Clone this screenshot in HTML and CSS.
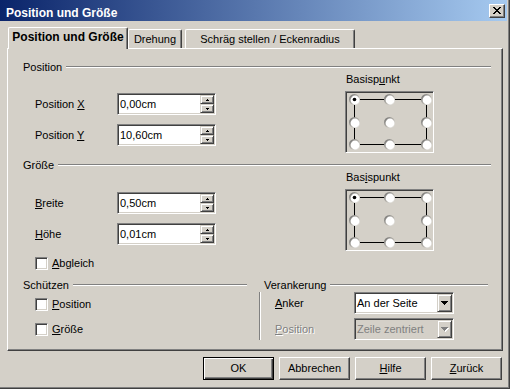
FILE: index.html
```html
<!DOCTYPE html>
<html lang="de">
<head>
<meta charset="utf-8">
<title>Position und Größe</title>
<link rel="stylesheet" href="styles.css">
</head>
<body>
<div class="window">
  <div class="titlebar">
    <span class="title">Position und Größe</span>
    <span class="close" aria-label="Schließen">
      <svg width="8" height="7" viewBox="0 0 8 7" shape-rendering="crispEdges"><path d="M0 0h2v1H0zM6 0h2v1H6zM1 1h2v1H1zM5 1h2v1H5zM2 2h4v1H2zM3 3h2v1H3zM2 4h4v1H2zM1 5h2v1H1zM5 5h2v1H5zM0 6h2v1H0zM6 6h2v1H6z"/></svg>
    </span>
  </div>

  <div class="tabs">
    <div class="tab tab-active">Position und Größe</div>
    <div class="tab tab-rot">Drehung</div>
    <div class="tab tab-slant">Schräg stellen / Eckenradius</div>
  </div>

  <div class="panel">
    <section class="group group-pos">
      <div class="group-head"><span>Position</span><i class="rule"></i></div>
      <div class="group-body">
        <div class="fields">
          <div class="field">
            <span class="field-label">Position <u>X</u></span>
            <div class="spin">
              <span class="spin-val">0,00cm</span>
              <span class="spin-btns">
                <span class="spin-btn"><svg width="3" height="2" viewBox="0 0 3 2" shape-rendering="crispEdges"><path d="M1 0h1v1H1zM0 1h3v1H0z"/></svg></span>
                <span class="spin-btn"><svg width="3" height="2" viewBox="0 0 3 2" shape-rendering="crispEdges"><path d="M0 0h3v1H0zM1 1h1v1H1z"/></svg></span>
              </span>
            </div>
          </div>
          <div class="field">
            <span class="field-label">Position <u>Y</u></span>
            <div class="spin">
              <span class="spin-val">10,60cm</span>
              <span class="spin-btns">
                <span class="spin-btn"><svg width="3" height="2" viewBox="0 0 3 2" shape-rendering="crispEdges"><path d="M1 0h1v1H1zM0 1h3v1H0z"/></svg></span>
                <span class="spin-btn"><svg width="3" height="2" viewBox="0 0 3 2" shape-rendering="crispEdges"><path d="M0 0h3v1H0zM1 1h1v1H1z"/></svg></span>
              </span>
            </div>
          </div>
        </div>
        <div class="refpoint">
          <div class="rp-label">Basisp<u>u</u>nkt</div>
          <div class="rp-box">
            <svg width="85" height="58" viewBox="0 0 85 58">
              <defs>
                <linearGradient id="ring1" x1="0" y1="0" x2="1" y2="1">
                  <stop offset="0" stop-color="#6a6a6a"/>
                  <stop offset="0.55" stop-color="#b8b5ae"/>
                  <stop offset="1" stop-color="#ffffff"/>
                </linearGradient>
              </defs>
              <rect x="7.5" y="6.5" width="72" height="45" fill="none" stroke="#000" stroke-width="1"/>
              <g fill="url(#ring1)">
                <circle cx="7.5" cy="6.5" r="5.5"/><circle cx="42.5" cy="6.5" r="5.5"/><circle cx="79.5" cy="6.5" r="5.5"/>
                <circle cx="7.5" cy="29.5" r="5.5"/><circle cx="42.5" cy="29.5" r="5.5"/><circle cx="79.5" cy="29.5" r="5.5"/>
                <circle cx="7.5" cy="51.5" r="5.5"/><circle cx="42.5" cy="51.5" r="5.5"/><circle cx="79.5" cy="51.5" r="5.5"/>
              </g>
              <g fill="#fff">
                <circle cx="8" cy="7" r="4.4"/><circle cx="43" cy="7" r="4.4"/><circle cx="80" cy="7" r="4.4"/>
                <circle cx="8" cy="30" r="4.4"/><circle cx="43" cy="30" r="4.4"/><circle cx="80" cy="30" r="4.4"/>
                <circle cx="8" cy="52" r="4.4"/><circle cx="43" cy="52" r="4.4"/><circle cx="80" cy="52" r="4.4"/>
              </g>
              <circle cx="7.5" cy="6.5" r="1.8" fill="#000"/>
            </svg>
          </div>
        </div>
      </div>
    </section>

    <section class="group group-size">
      <div class="group-head"><span>Größe</span><i class="rule"></i></div>
      <div class="group-body">
        <div class="fields fields-size">
          <div class="field">
            <span class="field-label"><u>B</u>reite</span>
            <div class="spin">
              <span class="spin-val">0,50cm</span>
              <span class="spin-btns">
                <span class="spin-btn"><svg width="3" height="2" viewBox="0 0 3 2" shape-rendering="crispEdges"><path d="M1 0h1v1H1zM0 1h3v1H0z"/></svg></span>
                <span class="spin-btn"><svg width="3" height="2" viewBox="0 0 3 2" shape-rendering="crispEdges"><path d="M0 0h3v1H0zM1 1h1v1H1z"/></svg></span>
              </span>
            </div>
          </div>
          <div class="field">
            <span class="field-label"><u>H</u>öhe</span>
            <div class="spin">
              <span class="spin-val">0,01cm</span>
              <span class="spin-btns">
                <span class="spin-btn"><svg width="3" height="2" viewBox="0 0 3 2" shape-rendering="crispEdges"><path d="M1 0h1v1H1zM0 1h3v1H0z"/></svg></span>
                <span class="spin-btn"><svg width="3" height="2" viewBox="0 0 3 2" shape-rendering="crispEdges"><path d="M0 0h3v1H0zM1 1h1v1H1z"/></svg></span>
              </span>
            </div>
          </div>
          <div class="check-row check-keep">
            <span class="check"></span><span><u>A</u>bgleich</span>
          </div>
        </div>
        <div class="refpoint">
          <div class="rp-label">Bas<u>i</u>spunkt</div>
          <div class="rp-box">
            <svg width="85" height="58" viewBox="0 0 85 58">
              <defs>
                <linearGradient id="ring2" x1="0" y1="0" x2="1" y2="1">
                  <stop offset="0" stop-color="#6a6a6a"/>
                  <stop offset="0.55" stop-color="#b8b5ae"/>
                  <stop offset="1" stop-color="#ffffff"/>
                </linearGradient>
              </defs>
              <rect x="7.5" y="6.5" width="72" height="45" fill="none" stroke="#000" stroke-width="1"/>
              <g fill="url(#ring2)">
                <circle cx="7.5" cy="6.5" r="5.5"/><circle cx="42.5" cy="6.5" r="5.5"/><circle cx="79.5" cy="6.5" r="5.5"/>
                <circle cx="7.5" cy="29.5" r="5.5"/><circle cx="42.5" cy="29.5" r="5.5"/><circle cx="79.5" cy="29.5" r="5.5"/>
                <circle cx="7.5" cy="51.5" r="5.5"/><circle cx="42.5" cy="51.5" r="5.5"/><circle cx="79.5" cy="51.5" r="5.5"/>
              </g>
              <g fill="#fff">
                <circle cx="8" cy="7" r="4.4"/><circle cx="43" cy="7" r="4.4"/><circle cx="80" cy="7" r="4.4"/>
                <circle cx="8" cy="30" r="4.4"/><circle cx="43" cy="30" r="4.4"/><circle cx="80" cy="30" r="4.4"/>
                <circle cx="8" cy="52" r="4.4"/><circle cx="43" cy="52" r="4.4"/><circle cx="80" cy="52" r="4.4"/>
              </g>
              <circle cx="7.5" cy="6.5" r="1.8" fill="#000"/>
            </svg>
          </div>
        </div>
      </div>
    </section>

    <div class="bottom">
      <section class="group-prot">
        <div class="group-head"><span>Schützen</span><i class="rule"></i></div>
        <div class="prot-body">
          <div class="check-row"><span class="check"></span><span><u>P</u>osition</span></div>
          <div class="check-row"><span class="check"></span><span><u>G</u>röße</span></div>
        </div>
      </section>
      <section class="group-anchor">
        <div class="group-head anchor-head"><span>Verankerung</span><i class="rule"></i></div>
        <div class="anchor-body">
          <div class="field">
            <span class="anchor-label"><u>A</u>nker</span>
            <div class="combo">
              <span class="combo-val">An der Seite</span>
              <span class="combo-btn"><svg width="7" height="4" viewBox="0 0 7 4" shape-rendering="crispEdges"><path d="M0 0h7v1H0zM1 1h5v1H1zM2 2h3v1H2zM3 3h1v1H3z"/></svg></span>
            </div>
          </div>
          <div class="field">
            <span class="anchor-label disabled"><u>P</u>osition</span>
            <div class="combo combo-disabled">
              <span class="combo-val">Zeile zentriert</span>
              <span class="combo-btn"><svg width="8" height="5" viewBox="0 0 8 5" shape-rendering="crispEdges"><path fill="#fff" d="M1 1h7v1H1zM2 2h5v1H2zM3 3h3v1H3zM4 4h1v1H4z"/><path fill="#808080" d="M0 0h7v1H0zM1 1h5v1H1zM2 2h3v1H2zM3 3h1v1H3z"/></svg></span>
            </div>
          </div>
        </div>
      </section>
    </div>
  </div>

  <div class="buttons">
    <button class="btn btn-default">OK</button>
    <button class="btn">Abbrechen</button>
    <button class="btn"><u>H</u>ilfe</button>
    <button class="btn"><u>Z</u>urück</button>
  </div>
</div>
</body>
</html>
```

FILE: styles.css
```css
* { box-sizing: border-box; }

html, body {
  margin: 0;
  padding: 0;
}

body {
  width: 510px;
  height: 389px;
  overflow: hidden;
  background: #d4d0c8;
  color: #000;
  font: 11px/13px "Liberation Sans", Arial, sans-serif;
}

u { text-decoration: underline; text-underline-offset: 1px; }

.window {
  width: 510px;
  height: 389px;
  border-right: 1px solid #404040;
  border-bottom: 1px solid #404040;
  box-shadow: inset -1px -1px 0 #808080;
  display: flex;
  flex-direction: column;
}

/* title bar */
.titlebar {
  flex: none;
  width: 507px;
  height: 21px;
  background: linear-gradient(to right, #0a246a, #a6caf0);
  display: flex;
  align-items: center;
  justify-content: space-between;
  padding: 0 2px 0 6px;
}

.title {
  color: #fff;
  font-weight: bold;
  font-size: 12px;
  line-height: 14px;
  padding-top: 4px;
}

.close {
  width: 16px;
  height: 14px;
  background: #d4d0c8;
  border: 1px solid;
  border-color: #fff #404040 #404040 #fff;
  box-shadow: inset -1px -1px 0 #808080;
  display: flex;
  align-items: center;
  justify-content: center;
  padding-right: 1px;
}

.close svg { display: block; }

/* tabs */
.tabs {
  flex: none;
  display: flex;
  align-items: flex-end;
  height: 21px;
  margin-top: 6px;
  padding-left: 8px;
}

.tab {
  height: 19px;
  border-top: 1px solid #fff;
  border-left: 1px solid #fff;
  border-right: 1px solid #404040;
  box-shadow: inset -1px 0 0 #808080;
  border-radius: 2px 2px 0 0;
  display: flex;
  align-items: center;
  justify-content: center;
  padding-top: 1px;
}

.tab-active {
  position: relative;
  z-index: 1;
  width: 120px;
  height: 22px;
  margin-bottom: -1px;
  background: #d4d0c8;
  font-weight: bold;
  font-size: 12px;
  padding-top: 0;
  padding-bottom: 2px;
}

.tab-rot { width: 54px; }

.tab-slant {
  width: 170px;
  margin-left: 3px;
}

/* panel */
.panel {
  flex: none;
  margin-left: 7px;
  width: 496px;
  height: 303px;
  border: 1px solid;
  border-color: #fff #404040 #404040 #fff;
  box-shadow: inset -1px -1px 0 #808080;
  padding: 12px 11px 0 15px;
}

.group-head {
  display: flex;
  align-items: center;
  height: 12px;
  line-height: 12px;
}

.rule {
  flex: 1;
  height: 2px;
  margin-left: 4px;
  border-top: 1px solid #808080;
  border-bottom: 1px solid #fff;
}

.group-pos { margin-bottom: 6px; }
.group-size { margin-bottom: 9px; }

.group-body { display: flex; }

.fields {
  width: 322px;
  padding-left: 12px;
  padding-top: 20px;
  display: flex;
  flex-direction: column;
  gap: 9px;
}

.fields-size { padding-top: 21px; }

.field {
  display: flex;
  align-items: center;
  height: 22px;
}

.field-label { width: 82px; }

.spin, .combo {
  height: 22px;
  background: #fff;
  border: 1px solid;
  border-color: #808080 #fff #fff #808080;
  box-shadow: inset 1px 1px 0 #404040, inset -1px -1px 0 #d4d0c8;
  padding: 1px;
  display: flex;
}

.spin { width: 99px; }

.spin-val, .combo-val {
  flex: 1;
  line-height: 18px;
  padding-left: 1px;
  white-space: nowrap;
}

.spin-btns {
  width: 14px;
  display: flex;
  flex-direction: column;
}

.spin-btn, .combo-btn {
  background: #d4d0c8;
  border: 1px solid;
  border-color: #d4d0c8 #404040 #404040 #d4d0c8;
  box-shadow: inset 1px 1px 0 #fff, inset -1px -1px 0 #808080;
  display: flex;
  align-items: center;
  justify-content: center;
}

.spin-btn { height: 9px; }
.spin-btn svg, .combo-btn svg { display: block; }

.refpoint { width: 89px; }

.rp-label {
  height: 13px;
  padding-left: 1px;
}

.rp-box {
  margin-top: 5px;
  width: 89px;
  height: 62px;
  border: 1px solid;
  border-color: #808080 #fff #fff #808080;
  box-shadow: inset 1px 1px 0 #404040, inset -1px -1px 0 #d4d0c8;
  padding: 1px;
}

.rp-box svg { display: block; }

.check-row {
  display: flex;
  align-items: center;
  gap: 4px;
  height: 13px;
}

.check-keep { margin-top: 3px; }

.check {
  flex: none;
  width: 13px;
  height: 13px;
  background: #fff;
  border: 1px solid;
  border-color: #808080 #fff #fff #808080;
  box-shadow: inset 1px 1px 0 #404040, inset -1px -1px 0 #d4d0c8;
}

/* bottom groups */
.bottom {
  display: grid;
  grid-template-columns: 224px 231px;
  column-gap: 12px;
}

.prot-body {
  padding: 7px 0 0 12px;
  display: flex;
  flex-direction: column;
  gap: 12px;
}

.anchor-head { padding: 0 2px 0 5px; }

.anchor-body {
  margin-top: 1px;
  border-left: 1px solid #808080;
  box-shadow: inset 1px 0 0 #fff;
  padding-left: 15px;
  display: flex;
  flex-direction: column;
  gap: 4px;
}

.anchor-label { width: 79px; }

.disabled {
  color: #808080;
  text-shadow: 1px 1px 0 #fff;
}

.combo { width: 100px; }

.combo-btn { width: 15px; }

.combo-disabled { background: #d4d0c8; }
.combo-disabled .combo-val { color: #808080; }

/* buttons */
.buttons {
  flex: none;
  display: flex;
  justify-content: flex-end;
  gap: 5px;
  margin-top: 6px;
  padding-right: 7px;
}

.btn {
  width: 71px;
  height: 23px;
  padding: 0;
  font: inherit;
  color: #000;
  background: #d4d0c8;
  border: 1px solid;
  border-color: #fff #404040 #404040 #fff;
  box-shadow: inset -1px -1px 0 #808080;
}

.btn-default {
  border-color: #000;
  box-shadow: inset 1px 1px 0 #fff, inset -1px -1px 0 #404040, inset -2px -2px 0 #808080;
}
```
